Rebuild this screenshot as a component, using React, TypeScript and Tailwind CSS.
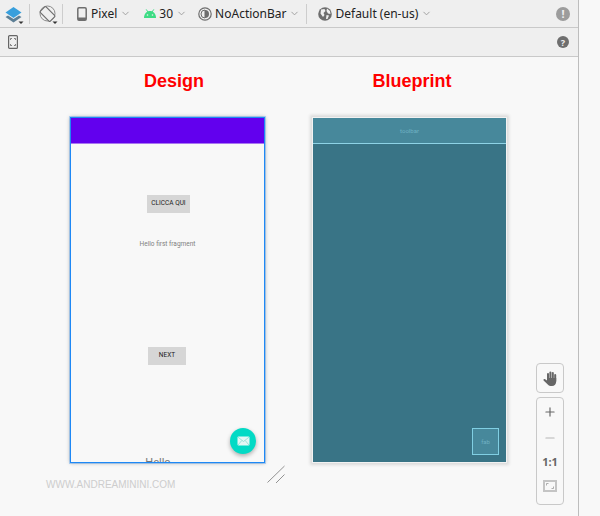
import { ChevronDown, Plus, Minus } from 'lucide-react';

function Caret() {
  return <ChevronDown className="w-[11px] h-[11px] text-[#9a9a9a] ml-[3px]" strokeWidth={2} />;
}

function Divider() {
  return <div className="w-px h-[20px] bg-[#cdcdcd]" />;
}

function LayersIcon() {
  return (
    <svg width="20" height="20" viewBox="0 0 20 20" className="ml-[4px]">
      <path d="M1.5 13 L4 11.5 L9.5 15 L15 11.5 L17.5 13 L9.5 18.5 Z" fill="#5d7f95" />
      <path d="M1.5 8.5 L9.5 3 L17.5 8.5 L9.5 14 Z" fill="#389fdc" />
      <path d="M14.5 17.5 L19.5 17.5 L17 20 Z" fill="#333" />
    </svg>
  );
}

function RotateIcon() {
  return (
    <svg width="20" height="20" viewBox="0 0 20 20" fill="none">
      <circle cx="9.5" cy="9.5" r="7.5" stroke="#8a8a8a" strokeWidth="1" />
      <rect x="5.5" y="3" width="8" height="14" rx="1" transform="rotate(-45 9.5 10)" fill="#efefef" stroke="#6e6e6e" strokeWidth="1.2" />
      <path d="M14.5 17.5 L19.5 17.5 L17 20 Z" fill="#333" />
    </svg>
  );
}

function PhoneIcon() {
  return (
    <svg width="10" height="14" viewBox="0 0 10 14" fill="none">
      <rect x="0.8" y="0.8" width="8.4" height="12.4" rx="1.2" stroke="#6e6e6e" strokeWidth="1.5" />
      <rect x="1" y="10.5" width="8" height="2.5" fill="#6e6e6e" />
    </svg>
  );
}

function AndroidIcon() {
  return (
    <svg width="14" height="10" viewBox="0 0 14 10">
      <path d="M1 9 C1 4.5 4 2 7 2 C10 2 13 4.5 13 9 Z" fill="#3ddc84" />
      <path d="M3.2 0.4 L5 3 M10.8 0.4 L9 3" stroke="#3ddc84" strokeWidth="1" />
      <circle cx="4.5" cy="6" r="0.8" fill="#efefef" />
      <circle cx="9.5" cy="6" r="0.8" fill="#efefef" />
    </svg>
  );
}

function ThemeIcon() {
  return (
    <svg width="14" height="14" viewBox="0 0 14 14" fill="none">
      <circle cx="7" cy="7" r="6.2" stroke="#6e6e6e" strokeWidth="1.2" />
      <path d="M7 3 A4 4 0 0 0 7 11 Z" fill="#efefef" stroke="#6e6e6e" />
      <path d="M7 3 A4 4 0 0 1 7 11 Z" fill="#6e6e6e" />
    </svg>
  );
}

function GlobeIcon() {
  return (
    <svg width="14" height="14" viewBox="0 0 14 14">
      <circle cx="7" cy="7" r="6.8" fill="#6e6e6e" />
      <path d="M3 2.5 L6.5 2 L7.5 4 L5.5 6 L6.5 8 L5 10 L2.5 6.5 Z M9 1.5 L12 4 L12.5 7 L10 6.5 L8.5 4 Z M8.5 8 L11 8.5 L9.5 12 L8 12 Z" fill="#efefef" />
    </svg>
  );
}

function FrameIcon() {
  return (
    <svg width="10" height="14" viewBox="0 0 10 14" fill="none">
      <rect x="0.6" y="0.6" width="8.8" height="12.8" rx="1" stroke="#666" strokeWidth="1.2" />
      <path d="M2.5 5 V3.5 H4 M6 3.5 H7.5 V5 M2.5 9 V10.5 H4 M6 10.5 H7.5 V9" stroke="#666" strokeWidth="0.8" />
    </svg>
  );
}

function HandIcon() {
  return (
    <svg width="14" height="15" viewBox="0 0 14 15" fill="#666">
      <rect x="4" y="2" width="2" height="8" rx="1" />
      <rect x="6.4" y="0.5" width="2" height="9" rx="1" />
      <rect x="8.8" y="1" width="2" height="9" rx="1" />
      <rect x="11.2" y="3" width="2" height="8" rx="1" />
      <path d="M4 7 H13.2 V10.5 C13.2 13 11.5 15 9 15 H7.5 C6 15 5 14 4 12.8 L0.6 9.4 C0 8.8 0.8 7.8 1.8 8.1 L4 9.4 Z" />
    </svg>
  );
}

function EnvelopeIcon() {
  return (
    <svg width="13" height="10" viewBox="0 0 13 10">
      <rect x="0.5" y="0.5" width="12" height="9" rx="1" fill="#e6f7f5" />
      <path d="M1 1.2 L6.5 5.5 L12 1.2 M1 9 L4.8 4.5 M12 9 L8.2 4.5" fill="none" stroke="#7fd8cd" strokeWidth="0.7" />
    </svg>
  );
}

function RoundBadge({ size, color, mark }: { size: string; color: string; mark: string }) {
  return (
    <div className={`${size} ${color} rounded-full flex items-center justify-center text-[#efefef] font-bold leading-none`}>
      {mark}
    </div>
  );
}

function Toolbar() {
  return (
    <div className="w-[578px] bg-[#efefef] text-[12px] text-[#222] font-['Noto_Sans',sans-serif]">
      <div className="h-[28px] border-b border-[#c9c9c9] flex items-center">
        <LayersIcon />
        <div className="ml-[5px]"><Divider /></div>
        <div className="ml-[8px]"><RotateIcon /></div>
        <div className="ml-[4px]"><Divider /></div>
        <div className="ml-[14px]"><PhoneIcon /></div>
        <span className="ml-[4px]">Pixel</span>
        <Caret />
        <div className="ml-[12px]"><AndroidIcon /></div>
        <span className="ml-[2px]">30</span>
        <Caret />
        <div className="ml-[11px]"><ThemeIcon /></div>
        <span className="ml-[3px]">NoActionBar</span>
        <Caret />
        <div className="ml-[6px]"><Divider /></div>
        <div className="ml-[11px]"><GlobeIcon /></div>
        <span className="ml-[3px]">Default (en-us)</span>
        <Caret />
        <div className="ml-auto mr-[8px]">
          <RoundBadge size="w-[14px] h-[14px] text-[11px]" color="bg-[#9c9c9c]" mark="!" />
        </div>
      </div>
      <div className="h-[29px] border-b border-[#c9c9c9] flex items-center">
        <div className="ml-[8px]"><FrameIcon /></div>
        <div className="ml-auto mr-[9px]">
          <RoundBadge size="w-[12px] h-[12px] text-[9px]" color="bg-[#6e6e6e]" mark="?" />
        </div>
      </div>
    </div>
  );
}

function DesignPhone() {
  return (
    <div className="relative w-[195px] h-[346px] border-[1.3px] border-[#1e88f5] bg-[#f8f8f8] overflow-hidden shadow-[0_0_0_1px_rgba(30,136,245,0.3),0_0_4px_rgba(0,0,0,0.3)] flex flex-col items-center font-['Roboto',sans-serif]">
      <div className="w-full h-[26px] shrink-0 bg-[#6200ee] border-b border-[#a875f0]" />
      <div className="ml-[2px] mt-[51px] w-[43px] h-[18px] shrink-0 bg-[#d6d6d6] flex items-center justify-center text-[6.5px] text-[#222] whitespace-nowrap">
        CLICCA QUI
      </div>
      <div className="mt-[25px] h-[12px] shrink-0 leading-[12px] text-[6.5px] text-[#808080] whitespace-nowrap">Hello first fragment</div>
      <div className="ml-[-1px] mt-[97px] w-[38px] h-[18px] shrink-0 bg-[#d6d6d6] flex items-center justify-center text-[6.5px] text-[#222]">
        NEXT
      </div>
      <div className="mt-[91px] mr-[19px] text-[11px] leading-[14px] text-[#777] shrink-0">Hello</div>
      <div className="absolute left-[159px] top-[310px] w-[26px] h-[26px] rounded-full bg-[#03dac5] flex items-center justify-center shadow-[0_2px_4px_rgba(0,0,0,0.3)]">
        <EnvelopeIcon />
      </div>
    </div>
  );
}

function BlueprintPhone() {
  return (
    <div className="w-[195px] h-[346px] border border-[#f2f2f2] bg-[#397486] shadow-[0_0_3px_2px_rgba(0,0,0,0.12)] flex flex-col font-['Roboto',sans-serif]">
      <div className="h-[26px] shrink-0 bg-[#47889b] border-b border-[#8ed3e6] flex items-center justify-center text-[6px] text-[#6fb1c3]">
        toolbar
      </div>
      <div className="flex-1 flex items-end justify-end pr-[7px] pb-[7px]">
        <div className="w-[27px] h-[27px] bg-[#47889b] border border-[#80cfe3] flex items-center justify-center text-[6px] text-[#6fb1c3]">
          fab
        </div>
      </div>
    </div>
  );
}

function ZoomControls() {
  return (
    <div className="absolute left-[536px] top-[363px] w-[28px] flex flex-col gap-[4px] text-[#666]">
      <div className="h-[30px] border border-[#c9c9c9] rounded-[4px] bg-[#f8f8f8] flex items-center justify-center">
        <HandIcon />
      </div>
      <div className="h-[108px] border border-[#c9c9c9] rounded-[4px] bg-[#f8f8f8] flex flex-col items-center pt-[7px]">
        <Plus className="w-[14px] h-[14px]" strokeWidth={2} />
        <Minus className="w-[14px] h-[14px] mt-[12px] text-[#b5b5b5]" strokeWidth={2} />
        <div className="mt-[10px] text-[11px] leading-[14px] font-bold font-['Noto_Sans',sans-serif]">1:1</div>
        <div className="mt-[11px] w-[14px] h-[12px] border-2 border-[#c4c4c4] flex items-center justify-center">
          <svg width="8" height="6" viewBox="0 0 8 6" fill="none">
            <path d="M0.5 2.5 V0.5 H2.5 M7.5 3.5 V5.5 H5.5" stroke="#999" strokeWidth="0.8" />
          </svg>
        </div>
      </div>
    </div>
  );
}

export default function App() {
  return (
    <div className="relative w-[600px] h-[516px] overflow-hidden bg-[#f8f8f8]">
      <div className="w-[579px] h-full border-r border-[#bdbdbd]">
        <Toolbar />
        <div className="flex pl-[70px] gap-[47px] pt-[12px]">
          <div className="flex flex-col items-center">
            <div className="h-[24px] leading-[24px] text-[18px] font-bold text-[#ff0000] font-['Liberation_Sans',sans-serif] ml-[13px]">Design</div>
            <div className="h-[24px]" />
            <DesignPhone />
          </div>
          <div className="flex flex-col items-center">
            <div className="h-[24px] leading-[24px] text-[18px] font-bold text-[#ff0000] font-['Liberation_Sans',sans-serif] ml-[5px]">Blueprint</div>
            <div className="h-[24px]" />
            <BlueprintPhone />
          </div>
        </div>
        <div className="ml-[46px] mt-[15px] text-[10px] leading-[14px] text-[#cdcdcd] font-['Liberation_Sans',sans-serif]">
          WWW.ANDREAMININI.COM
        </div>
      </div>
      <svg className="absolute left-[266px] top-[465px]" width="20" height="20" viewBox="0 0 20 20" fill="none">
        <path d="M1.5 17.5 L18.5 1 M10 18 L18.5 9.5" stroke="#666" strokeWidth="0.7" />
      </svg>
      <ZoomControls />
    </div>
  );
}
